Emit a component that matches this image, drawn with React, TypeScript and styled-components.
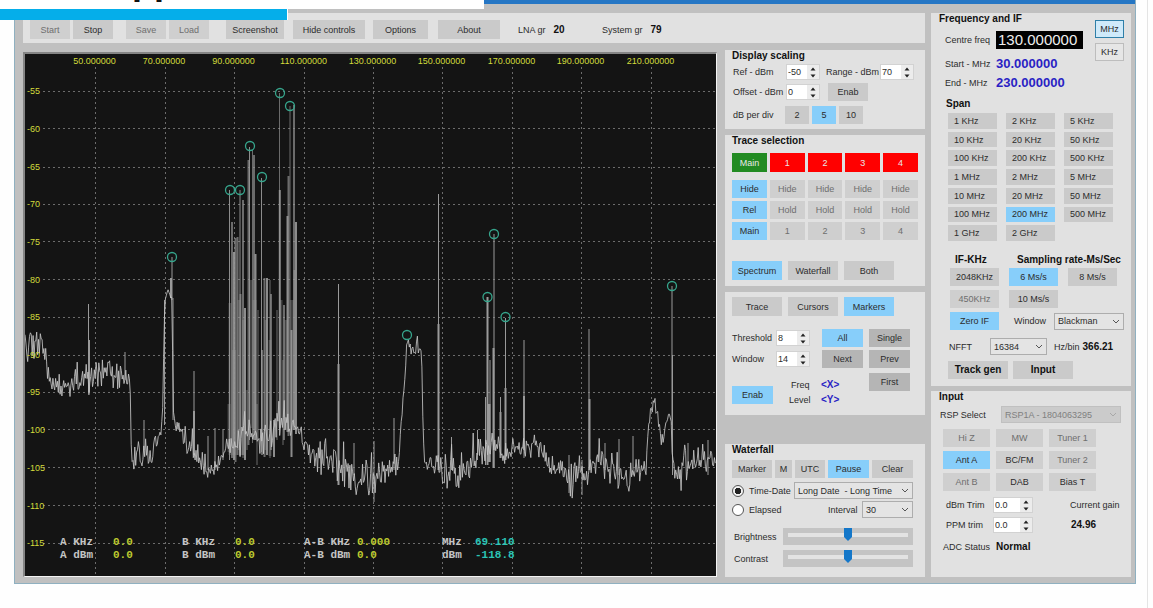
import React from "react";
import styled, { createGlobalStyle, css } from "styled-components";

const FONT = '"Liberation Sans", Arial, sans-serif';

const Global = createGlobalStyle`
  *, *::before, *::after { box-sizing: border-box; }
  body { margin: 0; background: #fefefe; font: 9px/12px ${FONT}; color: #2c2c2c; }
  button, input, select { font: inherit; color: inherit; margin: 0; }
`;

/* ---------- page and window ---------- */
const Page = styled.div`
  position: relative;
  min-height: 100vh;
  margin-right: 5px;
  padding: 0 11px 0 14px;
  border-right: 1px solid #e4e4e4;
`;
const Banner = styled.div`
  position: absolute;
  left: 0;
  top: 0;
  width: 42.2%;
  height: 9px;
  background: #fff;
`;
const BannerText = styled.div`
  margin-top: -18px;
  padding-left: 132px;
  color: #111;
  font-weight: bold;
  font-size: 36px;
  line-height: 0;
`;
const BannerRule = styled.div`
  position: absolute;
  left: 0;
  top: 9px;
  width: 25.1%;
  height: 11px;
  background: #05aeea;
  border-right: 1px solid #fff;
`;
const Window = styled.main`
  border: 1px solid #8fb0c0;
  border-top: 0;
  background: #c0c0c0;
`;
const TitleBar = styled.div`
  height: 4px;
  background: #2576c4;
`;
const Body = styled.div`
  display: flex;
  gap: 6px;
  padding: 9px 4px 6px 8px;
`;
const Main = styled.div`
  flex: 1;
  min-width: 0;
`;
const Work = styled.div`
  display: flex;
  gap: 8px;
`;
const Column = styled.div<{ $gap: number }>`
  flex: 0 0 200px;
  display: flex;
  flex-direction: column;
  gap: ${(p) => p.$gap}px;
`;
const Toolbar = styled.div`
  display: flex;
  align-items: center;
  height: 30px;
  margin-bottom: 7px;
  padding: 3px 7px 0;
  background: #e1e1e1;
`;
const ToolGroup = styled.div<{ $after: number }>`
  display: flex;
  gap: 3px;
  margin-right: ${(p) => p.$after}px;
`;
const Reading = styled.div`
  display: flex;
  gap: 8px;
  width: 84px;
`;
const Frame = styled.div`
  flex: 1;
  min-width: 0;
  margin-top: 2px;
  border: 2px solid #858585;
  border-right: 1px solid #f4f4f4;
  border-bottom: 1px solid #f4f4f4;
  background: #141414;
`;
const Plot = styled.svg`
  display: block;
  width: 100%;
  height: auto;
`;

/* ---------- shared controls ---------- */
type Tone = "plain" | "light" | "dark" | "on" | "green" | "red" | "faded";
const fills: Record<Tone, string> = {
  plain: "#cacaca",
  light: "#cfcfcf",
  dark: "#b5b5b5",
  on: "#87cefa",
  green: "#228b22",
  red: "#ff0000",
  faded: "#cfcfcf",
};
const Btn = styled.button<{ $w?: number; $tone?: Tone; $h?: number; $left?: boolean; $bold?: boolean }>`
  width: ${(p) => (p.$w ? p.$w + "px" : "100%")};
  height: ${(p) => p.$h ?? 18}px;
  padding: 0 ${(p) => (p.$left ? 6 : 0)}px;
  border: 0;
  background: ${(p) => fills[p.$tone ?? "plain"]};
  text-align: ${(p) => (p.$left ? "left" : "center")};
  white-space: nowrap;
  line-height: 12px;
  ${(p) => p.$tone === "faded" && css`color: #6e6e6e;`}
  ${(p) => (p.$tone === "red" || p.$tone === "green") && css`color: #e8e8e8;`}
  ${(p) => p.$bold && css`font-weight: bold; font-size: 10px; color: #111;`}
`;
const UnitBtn = styled.button<{ $on?: boolean }>`
  width: 29px;
  height: 18px;
  padding: 0;
  border: 1px solid ${(p) => (p.$on ? "#2f7fa8" : "#bdbdbd")};
  background: ${(p) => (p.$on ? "#cfeafa" : "#e6e6e6")};
`;
const Panel = styled.section<{ $h: number }>`
  min-height: ${(p) => p.$h}px;
  padding: 0 7px;
  background: #e1e1e1;
`;
const Title = styled.h2<{ $mb?: number; $in?: number }>`
  margin: 0 0 ${(p) => p.$mb ?? 0}px;
  padding-left: ${(p) => p.$in ?? 0}px;
  font-size: 10px;
  line-height: 12px;
  font-weight: bold;
  color: #111;
  white-space: nowrap;
`;
const Row = styled.div<{ $gap?: number; $mt?: number; $pl?: number }>`
  display: flex;
  align-items: center;
  gap: ${(p) => p.$gap ?? 0}px;
  margin-top: ${(p) => p.$mt ?? 0}px;
  padding-left: ${(p) => p.$pl ?? 0}px;
`;
const Grid = styled.div<{ $cols: string; $gap: string; $mt?: number; $pl?: number; $top?: boolean }>`
  display: grid;
  grid-template-columns: ${(p) => p.$cols};
  gap: ${(p) => p.$gap};
  align-items: ${(p) => (p.$top ? "start" : "center")};
  margin-top: ${(p) => p.$mt ?? 0}px;
  padding-left: ${(p) => p.$pl ?? 0}px;
`;
const Label = styled.label<{ $w?: number }>`
  flex: none;
  width: ${(p) => (p.$w ? p.$w + "px" : "auto")};
  white-space: nowrap;
`;
const Text = styled.span<{ $w?: number }>`
  flex: none;
  width: ${(p) => (p.$w ? p.$w + "px" : "auto")};
  white-space: nowrap;
`;
const Strong = styled.strong`
  font-size: 10px;
  color: #111;
`;
const SpinBox = styled.span<{ $w: number }>`
  flex: none;
  display: flex;
  width: ${(p) => p.$w}px;
  height: 16px;
  background: #ececec;
  border: 1px solid #d2d2d2;
`;
const SpinInput = styled.input`
  flex: 1;
  min-width: 0;
  padding: 0 0 1px 1px;
  border: 0;
  background: #fff;
  outline: 0;
`;
const SpinKeys = styled.span`
  display: flex;
  flex-direction: column;
  width: 12px;
`;
const SpinKey = styled.button`
  flex: 1;
  display: flex;
  align-items: center;
  justify-content: center;
  padding: 0;
  border: 0;
  background: #ececec;
`;
function Spin({ id, value, w = 34 }: { id: string; value: string; w?: number }) {
  return (
    <SpinBox $w={w}>
      <SpinInput id={id} defaultValue={value} />
      <SpinKeys>
        <SpinKey aria-label="Increase">
          <svg width="6" height="4"><path d="M3 0.5L5.5 3.5H0.5Z" fill="#222" /></svg>
        </SpinKey>
        <SpinKey aria-label="Decrease">
          <svg width="6" height="4"><path d="M0.5 0.5H5.5L3 3.5Z" fill="#222" /></svg>
        </SpinKey>
      </SpinKeys>
    </SpinBox>
  );
}
const SelectBox = styled.span<{ $w: number }>`
  position: relative;
  flex: none;
  width: ${(p) => p.$w}px;
  height: 17px;
  svg { position: absolute; right: 4px; top: 6px; pointer-events: none; }
`;
const NativeSelect = styled.select`
  appearance: none;
  display: block;
  width: 100%;
  height: 17px;
  padding: 0 12px 0 3px;
  border: 1px solid #adadad;
  border-radius: 0;
  background: #e4e4e4;
  &:disabled { background: #cbcbcb; border-color: #c0c0c0; color: #808080; opacity: 1; }
`;
function Select({ id, value, w, disabled }: { id: string; value: string; w: number; disabled?: boolean }) {
  return (
    <SelectBox $w={w}>
      <NativeSelect id={id} disabled={disabled}><option>{value}</option></NativeSelect>
      <svg width="8" height="5" viewBox="0 0 8 5">
        <path d="M1 1L4 4L7 1" fill="none" stroke={disabled ? "#a8a8a8" : "#555"} />
      </svg>
    </SelectBox>
  );
}
const Radio = styled.input`
  appearance: none;
  flex: none;
  width: 12px;
  height: 12px;
  border: 1px solid #555;
  border-radius: 50%;
  background: #fff;
  &:checked { background: radial-gradient(circle, #222 0 3px, #f2f2f2 3px); }
`;
const Slider = styled.input`
  appearance: none;
  flex: none;
  width: 130px;
  height: 17px;
  padding: 0 5px;
  background: #c4c4c4;
  &::-webkit-slider-runnable-track {
    height: 4px;
    margin-bottom: 3px;
    background: #e3e3e3;
  }
  &::-webkit-slider-thumb {
    appearance: none;
    width: 8px;
    height: 13px;
    margin-top: -5px;
    background: #1477c9;
    clip-path: polygon(0 0, 100% 0, 100% 70%, 50% 100%, 0 70%);
  }
`;
const Blue = styled.output`
  font-weight: bold;
  font-size: 13px;
  line-height: 14px;
  color: #2a1fc4;
`;
const Tag = styled.output`
  font-weight: bold;
  font-size: 10px;
  color: #2a1fc4;
`;
const Centre = styled.input`
  width: 87px;
  height: 18px;
  padding: 0 2px;
  border: 0;
  background: #000;
  && { color: #eee; font-size: 15px; line-height: 18px; }
`;
const FreqArea = styled.div`
  display: flex;
  justify-content: space-between;
  height: 79px;
`;
const Units = styled.div`
  display: flex;
  flex-direction: column;
  gap: 5px;
  padding-top: 7px;
`;
const SpanGrid = styled.div`
  display: grid;
  grid-template-columns: repeat(3, 49px);
  grid-auto-rows: 1fr;
  gap: 3px 9px;
  height: 128px;
  margin: 3px 0 0 10px;
  button { height: 100%; }
`;
const Stack = styled.div<{ $gap: number; $w?: number; $mt?: number }>`
  display: flex;
  flex-direction: column;
  gap: ${(p) => p.$gap}px;
  width: ${(p) => (p.$w ? p.$w + "px" : "auto")};
  margin-top: ${(p) => p.$mt ?? 0}px;
`;
const Push = styled.div<{ $mt: number }>`
  margin-top: ${(p) => p.$mt}px;
`;

/* ---------- spectrum trace ---------- */
const vLines = [95.5, 165, 234.5, 304.5, 373.5, 442.5, 512.5, 581.5, 651.5];
const hLines = [91, 128.5, 167, 204, 241.5, 279.5, 317, 355, 392, 429.5, 467.5, 505.5, 543];

// [x, mean level, spread]
const floor: number[][] = [
  [25, 342, 22], [34, 343, 20], [42, 345, 12], [47, 368, 14], [52, 383, 12], [62, 386, 14], [70, 386, 16], [77, 377, 14],
  [83, 376, 20], [90, 384, 18], [96, 376, 18], [106, 372, 16], [116, 376, 15], [128, 374, 12], [130, 385, 4], [131, 440, 26],
  [133, 458, 16], [145, 456, 18], [152, 455, 12], [157, 440, 10], [162, 428, 8], [163, 400, 3], [164, 330, 3], [165, 302, 4],
  [168, 291, 4], [171, 295, 5], [172, 300, 4], [173, 385, 4], [174, 425, 10], [180, 435, 12], [190, 448, 12], [198, 463, 12],
  [207, 469, 13], [216, 464, 14], [224, 457, 12], [228, 448, 10], [240, 440, 16], [250, 430, 14], [262, 435, 22],
  [272, 435, 22], [285, 420, 26], [297, 430, 6], [305, 440, 14], [314, 456, 17], [326, 458, 18], [336, 462, 18],
  [344, 474, 20], [356, 475, 22], [366, 480, 16], [374, 482, 20], [382, 476, 15], [392, 464, 17], [398, 460, 12],
  [401, 430, 6], [403, 400, 8], [405, 375, 5], [407, 338, 4], [410, 347, 6], [414, 350, 6], [417, 345, 8], [421, 352, 6],
  [422, 365, 3], [423, 430, 3], [425, 465, 8], [432, 463, 12], [444, 472, 15], [458, 470, 19], [470, 462, 17], [480, 450, 17],
  [492, 452, 16], [503, 450, 18], [516, 450, 10], [528, 448, 10], [541, 444, 12], [547, 462, 10], [556, 468, 13],
  [568, 474, 20], [580, 476, 22], [592, 465, 16], [606, 464, 15], [622, 475, 18], [636, 474, 18], [646, 470, 10],
  [648, 430, 6], [651, 412, 9], [655, 404, 7], [658, 420, 7], [662, 445, 12], [665, 432, 6], [667, 416, 4], [671, 420, 6],
  [673, 470, 12], [680, 470, 20], [690, 464, 14], [700, 460, 15], [716, 462, 12],
];

let seed = 7919;
const rnd = () => {
  seed = (seed * 16807) % 2147483647;
  return seed / 2147483647;
};

function buildNoise() {
  const pts: string[] = [];
  let k = 0;
  for (let x = 25; x < 716; x += 0.9) {
    while (k < floor.length - 2 && floor[k + 1][0] <= x) k++;
    const [x0, y0, s0] = floor[k];
    const [x1, y1, s1] = floor[k + 1];
    const t = Math.min(1, (x - x0) / (x1 - x0));
    const spread = s0 + (s1 - s0) * t;
    const r = (rnd() + rnd() - 1) * 1.15;
    const burst = rnd() > 0.94 ? -spread * 0.9 : 0;
    pts.push(`${x.toFixed(1)},${(y0 + (y1 - y0) * t + r * spread + burst).toFixed(1)}`);
  }
  return pts.join(" ");
}

// [x, top, bottom, width]
const spikes: number[][] = [
  [88.5, 304, 392, 1], [89, 340, 392, 2], [125, 352, 380, 1], [144, 420, 450, 1], [172, 257, 300, 1], [171, 278, 298, 2],
  [164.5, 300, 425, 1], [173, 298, 420, 1],
  [194, 371, 455, 1], [194, 411, 455, 2], [208, 436, 470, 1], [215, 428, 470, 1], [223, 429, 460, 1],
  [438.5, 194, 470, 1], [438.5, 324, 470, 2], [338.5, 284, 485, 1], [338.5, 364, 485, 2], [354, 443, 475, 1],
  [374, 441, 502, 1], [394, 418, 470, 1], [487.5, 297, 465, 2], [490, 360, 462, 1], [489, 404, 462, 3], [494, 234, 468, 1],
  [493.5, 348, 468, 2], [485.5, 397, 465, 1], [500.5, 397, 458, 1], [500.5, 412, 458, 2], [505.5, 318, 460, 1],
  [505.5, 388, 460, 2], [524, 340, 458, 1], [524, 396, 450, 2], [477.5, 430, 460, 1], [451.5, 437, 470, 1],
  [589, 329, 470, 1], [589.5, 399, 470, 2], [605, 443, 470, 1], [619, 439, 475, 1], [633, 436, 475, 1],
  [672, 286, 425, 1], [672.5, 355, 475, 1], [688, 443, 468, 1], [708, 440, 475, 1], [569, 455, 493, 1], [582, 460, 495, 1],
];
const band: number[][] = [
  [229.5, 190, 460, 1], [230, 303, 455, 3], [232, 222, 458, 2], [234, 252, 460, 2], [235.5, 238, 462, 2], [237.5, 237, 455, 2],
  [240, 190, 456, 1], [240.5, 294, 455, 2], [243, 200, 455, 2], [245, 308, 460, 2], [247, 390, 450, 1], [248.5, 160, 445, 2],
  [249.5, 147, 440, 1], [252.5, 150, 443, 1], [254, 155, 440, 2], [255.5, 254, 440, 2], [257, 404, 465, 1], [258, 310, 440, 1],
  [261.5, 178, 452, 1], [262, 350, 455, 2], [264.5, 278, 457, 2], [267, 278, 455, 2], [270, 280, 458, 1], [271, 294, 450, 2],
  [274, 420, 457, 2], [277, 310, 440, 1], [279.5, 93, 430, 1], [279.8, 190, 428, 2], [283, 360, 445, 1], [284, 305, 440, 2],
  [287.5, 216, 432, 2], [288.5, 176, 436, 2], [290, 106, 432, 1], [291.5, 330, 457, 2], [294, 105, 430, 2], [294.5, 270, 430, 2],
  [296, 222, 434, 2], [229, 404, 452, 3], [234, 350, 455, 4], [239, 300, 450, 3], [244, 320, 458, 4], [251, 280, 428, 3],
  [254.5, 300, 430, 4], [266, 320, 450, 3], [270, 340, 456, 3], [281, 300, 425, 3], [286, 320, 430, 3], [292, 300, 430, 4],
];
const markers = [
  [172, 257], [230, 190], [240, 190], [250, 146], [262, 177], [280, 93], [290, 106],
  [407, 335], [487.5, 297], [494, 234], [505.5, 317], [672, 286],
];
const noise = buildNoise();

const axis = { fontFamily: FONT, fontSize: 9, fill: "#d3dc3c" };
const mono = { fontFamily: '"Liberation Mono", "Courier New", monospace', fontSize: 11, fontWeight: 700 };

function Spectrum() {
  const readouts: [number, string, string, number, string, string, string][] = [
    [60, "A KHz", "A dBm", 113, "0.0", "0.0", "#bcc92f"],
    [182, "B KHz", "B dBm", 235, "0.0", "0.0", "#bcc92f"],
    [304, "A-B KHz", "A-B dBm", 357, "0.000", "0.0", "#bcc92f"],
    [442, "MHz", "dBm", 475, "69.110", "-118.8", "#2bc4b6"],
  ];
  return (
    <Plot viewBox="25 54 691 522" role="img" aria-label="Spectrum">
      <rect x="25" y="54" width="691" height="522" fill="#141414" />
      <g stroke="#6c6c6c" strokeDasharray="2 3" shapeRendering="crispEdges">
        {vLines.map((x) => <line key={x} x1={x} x2={x} y1="67" y2="576" />)}
        {hLines.map((y) => <line key={y} x1="43" x2="716" y1={y} y2={y} />)}
      </g>
      <g stroke="#9a9a9a">
        {spikes.map(([x, a, b, w], i) => <line key={i} x1={x} x2={x} y1={a} y2={b} strokeWidth={w} />)}
      </g>
      <g stroke="#999">
        {band.map(([x, a, b, w], i) => (
          <line key={i} x1={x} x2={x} y1={a} y2={b} strokeWidth={w} strokeOpacity={w > 2 ? 0.35 : i % 3 === 0 ? 0.9 : 0.65} />
        ))}
      </g>
      <polyline points={noise} fill="none" stroke="#c4c4c4" strokeOpacity="0.85" strokeLinejoin="bevel" />
      <g fill="none" stroke="#36a58c" strokeWidth="1.3">
        {markers.map(([x, y]) => <circle key={x} cx={x} cy={y} r="4.5" />)}
      </g>
      {vLines.map((x, i) => (
        <text key={x} x={x - 1} y="64" textAnchor="middle" {...axis}>{50 + i * 20}.000000</text>
      ))}
      {hLines.map((y, i) => (
        <text key={y} x="27" y={y + 3} {...axis}>{-55 - i * 5}</text>
      ))}
      {readouts.map(([x, a, b, vx, v, w, c]) => (
        <g key={x} {...mono}>
          <text x={x} y="545" fill="#c4c4c4">{a}</text>
          <text x={x} y="558" fill="#c4c4c4">{b}</text>
          <text x={vx} y="545" fill={c}>{v}</text>
          <text x={vx} y="558" fill={c}>{w}</text>
        </g>
      ))}
    </Plot>
  );
}

/* ---------- panels ---------- */
const spans = [
  "1 KHz", "2 KHz", "5 KHz", "10 KHz", "20 KHz", "50 KHz", "100 KHz", "200 KHz", "500 KHz", "1 MHz", "2 MHz", "5 MHz",
  "10 MHz", "20 MHz", "50 MHz", "100 MHz", "200 MHz", "500 MHz", "1 GHz", "2 GHz",
];
const traceRows = [
  ["Hide", "Hide", "Hide", "Hide", "Hide"],
  ["Rel", "Hold", "Hold", "Hold", "Hold"],
  ["Main", "1", "2", "3", "4"],
];
const inputs: [string, Tone][] = [
  ["Hi Z", "faded"], ["MW", "faded"], ["Tuner 1", "faded"], ["Ant A", "on"], ["BC/FM", "light"], ["Tuner 2", "faded"],
  ["Ant B", "faded"], ["DAB", "light"], ["Bias T", "light"],
];

function MiddleColumn() {
  return (
    <Column $gap={6}>
      <Panel $h={79}>
        <Title $mb={2}>Display scaling</Title>
        <Row $pl={1}>
          <Label htmlFor="ref" $w={53}>Ref - dBm</Label>
          <Spin id="ref" value="-50" />
          <Row $pl={6}>
            <Label htmlFor="range" $w={54}>Range - dBm</Label>
            <Spin id="range" value="70" />
          </Row>
        </Row>
        <Row $pl={1} $mt={3}>
          <Label htmlFor="offset" $w={53}>Offset - dBm</Label>
          <Spin id="offset" value="0" />
          <Row $pl={8}><Btn $w={40}>Enab</Btn></Row>
        </Row>
        <Row $pl={1} $mt={5} $gap={3}>
          <Text $w={49}>dB per div</Text>
          <Btn $w={24}>2</Btn>
          <Btn $w={24} $tone="on">5</Btn>
          <Btn $w={24}>10</Btn>
        </Row>
      </Panel>
      <Panel $h={151}>
        <Title $mb={6}>Trace selection</Title>
        <Grid $cols="repeat(5, 1fr)" $gap="3px">
          <Btn $tone="green" $h={19}>Main</Btn>
          {[1, 2, 3, 4].map((n) => <Btn key={n} $tone="red" $h={19}>{n}</Btn>)}
        </Grid>
        <Grid $cols="repeat(5, 1fr)" $gap="3px" $mt={8}>
          {traceRows.flatMap((r, i) => r.map((t, j) => <Btn key={i + "-" + j} $tone={j ? "faded" : "on"}>{t}</Btn>))}
        </Grid>
        <Row $gap={6} $mt={21}>
          <Btn $w={50} $h={19} $tone="on">Spectrum</Btn>
          <Btn $w={50} $h={19}>Waterfall</Btn>
          <Btn $w={50} $h={19}>Both</Btn>
        </Row>
      </Panel>
      <Panel $h={123}>
        <Row $gap={6}>
          <Push $mt={5}><Btn $w={50} $h={19}>Trace</Btn></Push>
          <Push $mt={5}><Btn $w={50} $h={19}>Cursors</Btn></Push>
          <Push $mt={5}><Btn $w={50} $h={19} $tone="on">Markers</Btn></Push>
        </Row>
        <Row $mt={13}>
          <Label htmlFor="threshold" $w={44}>Threshold</Label>
          <Spin id="threshold" value="8" />
          <Row $pl={12} $gap={6}><Btn $w={41} $tone="on">All</Btn><Btn $w={41} $tone="dark">Single</Btn></Row>
        </Row>
        <Row $mt={3}>
          <Label htmlFor="window" $w={44}>Window</Label>
          <Spin id="window" value="14" />
          <Row $pl={12} $gap={6}><Btn $w={41} $tone="dark">Next</Btn><Btn $w={41} $tone="dark">Prev</Btn></Row>
        </Row>
        <Grid $cols="41px 36px 42px 41px" $gap="6px" $mt={5} $top>
          <Push $mt={13}><Btn $w={41} $tone="on">Enab</Btn></Push>
          <Stack $gap={3} $mt={6}>
            <Row $pl={12}>Freq</Row>
            <Row $pl={10}>Level</Row>
          </Stack>
          <Stack $gap={3} $mt={6}>
            <Tag>{"<X>"}</Tag>
            <Tag>{"<Y>"}</Tag>
          </Stack>
          <Btn $w={41} $tone="dark">First</Btn>
        </Grid>
      </Panel>
      <Push $mt={23}>
        <Panel $h={133}>
          <Title $mb={4}>Waterfall</Title>
          <Row $gap={3}>
            <Btn $w={40}>Marker</Btn>
            <Btn $w={17}>M</Btn>
            <Btn $w={30}>UTC</Btn>
            <Btn $w={41} $tone="on">Pause</Btn>
            <Btn $w={41}>Clear</Btn>
          </Row>
          <Row $mt={4}>
            <Radio type="radio" name="stamp" id="td" defaultChecked />
            <Row $pl={5}><Label htmlFor="td" $w={45}>Time-Date</Label></Row>
            <Select id="format" value={"Long Date \u00a0- Long Time"} w={119} />
          </Row>
          <Row $mt={2}>
            <Radio type="radio" name="stamp" id="el" />
            <Row $pl={5}><Label htmlFor="el" $w={79}>Elapsed</Label></Row>
            <Label htmlFor="interval" $w={34}>Interval</Label>
            <Select id="interval" value="30" w={51} />
          </Row>
          <Row $mt={10} $pl={2}>
            <Label htmlFor="bright" $w={49}>Brightness</Label>
            <Slider id="bright" type="range" defaultValue={50} />
          </Row>
          <Row $mt={5} $pl={2}>
            <Label htmlFor="contrast" $w={49}>Contrast</Label>
            <Slider id="contrast" type="range" defaultValue={50} />
          </Row>
        </Panel>
      </Push>
    </Column>
  );
}

function RightColumn() {
  return (
    <Column $gap={5}>
      <Panel $h={373}>
        <FreqArea>
          <div>
            <Title $in={1} $mb={6}>Frequency and IF</Title>
            <Row $pl={7}>
              <Label htmlFor="centre" $w={51}>Centre freq</Label>
              <Centre id="centre" defaultValue="130.000000" />
            </Row>
            <Row $pl={7} $mt={8}><Text $w={51}>Start - MHz</Text><Blue>30.000000</Blue></Row>
            <Row $pl={7} $mt={5}><Text $w={51}>End - MHz</Text><Blue>230.000000</Blue></Row>
          </div>
          <Units>
            <UnitBtn $on>MHz</UnitBtn>
            <UnitBtn>KHz</UnitBtn>
          </Units>
        </FreqArea>
        <Push $mt={6}><Title $in={8}>Span</Title></Push>
        <SpanGrid>
          {spans.map((s) => <Btn key={s} $left $tone={s === "200 MHz" ? "on" : "plain"}>{s}</Btn>)}
        </SpanGrid>
        <Row $mt={13} $pl={17}>
          <Text $w={62}><Strong>IF-KHz</Strong></Text>
          <Strong>Sampling rate-Ms/Sec</Strong>
        </Row>
        <Grid $cols="49px 49px 49px" $gap="4px 10px" $mt={2} $pl={12}>
          <Btn>2048KHz</Btn><Btn $tone="on">6 Ms/s</Btn><Btn>8 Ms/s</Btn>
          <Btn $tone="faded">450KHz</Btn><Btn>10 Ms/s</Btn>
        </Grid>
        <Row $mt={4} $pl={12}>
          <Btn $w={49} $tone="on">Zero IF</Btn>
          <Row $pl={15}><Label htmlFor="wfn" $w={40}>Window</Label></Row>
          <Select id="wfn" value="Blackman" w={70} />
        </Row>
        <Row $mt={8} $pl={11}>
          <Label htmlFor="nfft" $w={41}>NFFT</Label>
          <Select id="nfft" value="16384" w={57} />
          <Row $pl={7} $gap={3}><Text>Hz/bin</Text><Strong>366.21</Strong></Row>
        </Row>
        <Row $mt={6} $pl={10} $gap={5}>
          <Btn $w={60} $bold>Track gen</Btn>
          <Btn $w={60} $bold>Input</Btn>
        </Row>
      </Panel>
      <Panel $h={186}>
        <Title $in={1} $mb={3}>Input</Title>
        <Row $pl={2}>
          <Label htmlFor="rsp" $w={61}>RSP Select</Label>
          <Select id="rsp" value="RSP1A - 1804063295" w={120} disabled />
        </Row>
        <Grid $cols="47px 47px 47px" $gap="4px 6px" $mt={6} $pl={5}>
          {inputs.map(([t, tone]) => <Btn key={t} $tone={tone}>{t}</Btn>)}
        </Grid>
        <Row $mt={6} $pl={8}>
          <Label htmlFor="trim" $w={47}>dBm Trim</Label>
          <Spin id="trim" value="0.0" w={40} />
          <Row $pl={37}>Current gain</Row>
        </Row>
        <Row $mt={4} $pl={8}>
          <Label htmlFor="ppm" $w={47}>PPM trim</Label>
          <Spin id="ppm" value="0.0" w={40} />
          <Row $pl={38}><Strong>24.96</Strong></Row>
        </Row>
        <Row $mt={8} $pl={5}><Text $w={53}>ADC Status</Text><Strong>Normal</Strong></Row>
      </Panel>
    </Column>
  );
}

export default function App() {
  return (
    <Page>
      <Global />
      <Window>
        <TitleBar />
        <Body>
          <Main>
            <Toolbar>
              <ToolGroup $after={13}><Btn $w={40} $h={19} $tone="faded">Start</Btn><Btn $w={40} $h={19}>Stop</Btn></ToolGroup>
              <ToolGroup $after={17}><Btn $w={40} $h={19} $tone="faded">Save</Btn><Btn $w={40} $h={19} $tone="faded">Load</Btn></ToolGroup>
              <ToolGroup $after={9}><Btn $w={58} $h={19}>Screenshot</Btn></ToolGroup>
              <ToolGroup $after={8}><Btn $w={72} $h={19}>Hide controls</Btn></ToolGroup>
              <ToolGroup $after={10}><Btn $w={55} $h={19}>Options</Btn></ToolGroup>
              <ToolGroup $after={18}><Btn $w={62} $h={19}>About</Btn></ToolGroup>
              <Reading>LNA gr <Strong>20</Strong></Reading>
              <Reading>System gr <Strong>79</Strong></Reading>
            </Toolbar>
            <Work>
              <Frame><Spectrum /></Frame>
              <MiddleColumn />
            </Work>
          </Main>
          <RightColumn />
        </Body>
      </Window>
      <Banner><BannerText>pp</BannerText></Banner>
      <BannerRule />
    </Page>
  );
}
